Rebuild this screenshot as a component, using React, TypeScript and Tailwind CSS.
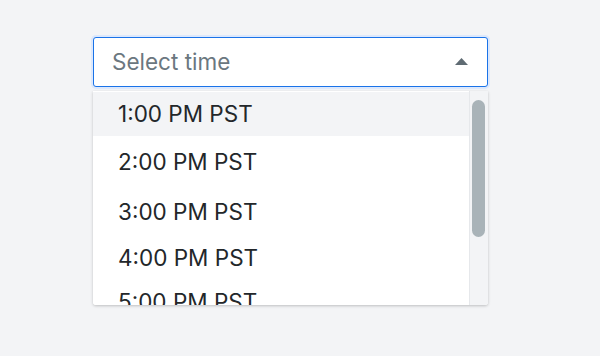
const times = [
  { label: '1:00 PM PST', h: 'h-[44px]', active: true },
  { label: '2:00 PM PST', h: 'h-[51px]' },
  { label: '3:00 PM PST', h: 'h-[49px]' },
  { label: '4:00 PM PST', h: 'h-[44px]' },
  { label: '5:00 PM PST', h: 'h-[44px]' },
]

export default function App() {
  return (
    <div className="min-h-[356px] w-[600px] bg-[#f3f4f6] pl-[93px] pt-[37px] font-['Inter',sans-serif]">
      <div className="w-[395px]">
        <button className="flex h-[50px] w-full items-center justify-between rounded-[3px] border border-[#1a73e8] bg-white pl-[18px] pr-[19px] ring-2 ring-[#dce8fc]">
          <span className="text-[22.5px] text-[#6b7780]">Select time</span>
          <svg width="13" height="7" viewBox="0 0 13 7" className="mt-[-1px]">
            <path d="M6.5 0L13 7H0z" fill="#5f6b73" />
          </svg>
        </button>

        <div className="mt-[4px] flex h-[214px] overflow-hidden rounded-b-[3px] bg-white shadow-[0_1px_3px_rgba(0,0,0,0.22)]">
          <ul className="flex-1 pt-[1px]">
            {times.map(t => (
              <li
                key={t.label}
                className={`flex ${t.h} items-center pl-[25px] text-[22.5px] text-[#23272a] ${
                  t.active ? 'bg-[#f3f4f6]' : 'bg-white'
                }`}
              >
                {t.label}
              </li>
            ))}
          </ul>
          <div className="w-[19px] shrink-0 border-l border-[#e6e8eb] bg-[#f3f4f6] pl-[2px] pt-[9px]">
            <div className="h-[137px] w-[13px] rounded-full bg-[#a9b3b8]" />
          </div>
        </div>
      </div>
    </div>
  )
}
